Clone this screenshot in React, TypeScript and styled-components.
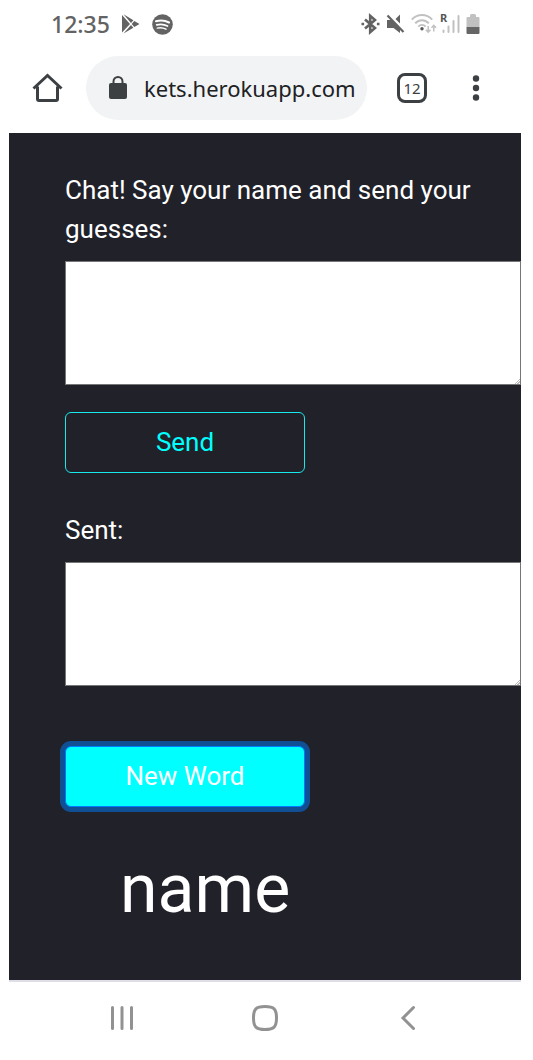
import React from "react";
import styled, { createGlobalStyle } from "styled-components";

const GlobalStyle = createGlobalStyle`
  *, *::before, *::after { box-sizing: border-box; }
  body { margin: 0; background: #fff; }
`;

const Phone = styled.div`
  display: flex;
  flex-direction: column;
  min-height: 100vh;
  padding: 0 12px 0 9px;
  background: #fff;
  font-family: Roboto, "Liberation Sans", sans-serif;
`;

const StatusBar = styled.header`
  display: flex;
  align-items: center;
  justify-content: space-between;
  height: 48px;
  padding: 0 41px 0 42px;
  color: #636363;
`;

const StatusGroup = styled.div<{ $gap: number }>`
  display: flex;
  align-items: center;
  gap: ${({ $gap }) => $gap}px;
  svg { display: block; overflow: visible; }
`;

const Clock = styled.time`
  font: 500 23px/32px "Noto Sans", sans-serif;
`;

const Toolbar = styled.nav`
  display: flex;
  align-items: center;
  height: 85px;
  padding: 8px 29px 13px 22px;
  color: #3c4043;
`;

const IconButton = styled.button`
  display: flex;
  align-items: center;
  justify-content: center;
  width: 32px;
  height: 40px;
  padding: 0;
  border: 0;
  background: none;
  color: inherit;
  cursor: pointer;
`;

const AddressPill = styled.div`
  display: flex;
  flex: 1;
  align-items: center;
  gap: 16px;
  min-width: 0;
  height: 64px;
  margin: 0 30px 0 23px;
  padding: 0 8px 0 22px;
  border-radius: 32px;
  background: #f1f3f4;
`;

const Address = styled.input`
  flex: 1;
  min-width: 0;
  height: 40px;
  padding: 0;
  border: 0;
  outline: 0;
  background: none;
  color: #202124;
  font: 400 22px/40px "Noto Sans", sans-serif;
`;

const TabsButton = styled.button`
  width: 30px;
  height: 30px;
  margin-right: 33px;
  padding: 0;
  border: 3px solid #3c4043;
  border-radius: 8px;
  background: none;
  color: #3c4043;
  font: 400 15px/24px "Noto Sans", sans-serif;
`;

const Page = styled.main`
  display: flex;
  flex: 1;
  flex-direction: column;
  align-items: flex-start;
  padding: 38px 0 0 56px;
  border-bottom: 2px solid #dfdee6;
  background: #212129;
  color: #fff;
`;

const Label = styled.label`
  padding-right: 40px;
  font-size: 26px;
  line-height: 39px;
`;

const MessageBox = styled.textarea`
  display: block;
  width: 100%;
  height: 124px;
  margin: 12px 0 27px;
  padding: 4px;
  border: 1px solid #767676;
  border-radius: 0;
  background: #fff;
  font: 22px/30px Roboto, sans-serif;

  &::-webkit-resizer {
    background: linear-gradient(135deg, #fff 0 17px, #bbb 17px 18px, #fff 18px 19px, #bbb 19px 20px, #fff 20px);
  }
`;

const ActionButton = styled.button<{ $active?: boolean }>`
  width: 240px;
  height: 61px;
  padding: 0;
  border: ${({ $active }) => ($active ? "1px solid #007bff" : "1px solid #17e9ec")};
  border-radius: 6px;
  background: ${({ $active }) => ($active ? "#00ffff" : "transparent")};
  box-shadow: ${({ $active }) => ($active ? "0 0 0 5px #114f95" : "none")};
  color: ${({ $active }) => ($active ? "#fff" : "#00ffff")};
  font: 26px/39px Roboto, sans-serif;
  cursor: pointer;
`;

const Field = styled.section<{ $space: number }>`
  display: flex;
  flex-direction: column;
  align-items: flex-start;
  width: 100%;
  margin-bottom: ${({ $space }) => $space}px;
`;

const Word = styled.p`
  margin: 41px 0 0;
  padding-left: 55px;
  font-size: 68px;
  line-height: 82px;
`;

const SystemNav = styled.footer`
  display: flex;
  align-items: center;
  justify-content: space-between;
  height: 78px;
  padding: 0 97px 6px;
  color: #929292;
`;

export default function App() {
  return (
    <>
      <GlobalStyle />
      <Phone>
        <StatusBar>
          <StatusGroup $gap={12}>
            <Clock>12:35</Clock>
            <svg width="18" height="20" viewBox="0 0 18 20" fill="currentColor">
              <path d="M0 1v17.500L8 10zM1.500.3 9 9l2.400-2.700zM1.500 19.500 9 11l2.400 2.700zM12.300 7 9.700 10l2.600 3L17.500 10z" />
            </svg>
            <svg width="21" height="21" viewBox="0 0 21 21" fill="none">
              <circle cx="10.500" cy="10.500" r="10.300" fill="#636363" />
              <g stroke="#fff" strokeLinecap="round">
                <path d="M4 7.300c4.500-1.300 9-.9 13 1.200" strokeWidth="2.100" />
                <path d="M4.700 10.900c3.800-1 7.500-.6 10.800 1.200" strokeWidth="1.700" />
                <path d="M5.300 14.100c3.200-.7 6-.4 8.700 1.100" strokeWidth="1.400" />
              </g>
            </svg>
          </StatusGroup>
          <StatusGroup $gap={6}>
            <svg width="19" height="20" viewBox="0 0 19 20" fill="none" stroke="currentColor" strokeWidth="2.600">
              <path d="M4 5.500 14 14l-4.800 4.200V1.800L14 6 4 14.500" />
              <path d="M.5 10h2.600M15.900 10h2.600" />
            </svg>
            <svg width="19" height="20" viewBox="0 0 19 20" fill="currentColor">
              <path d="M1 6h4.500L14 14.500V19L7.500 14H1zM9.500 5l4.500-4.500V9.500z" />
              <path d="M1.500 1.500 17.500 18" stroke="currentColor" strokeWidth="2.200" />
            </svg>
            <svg width="25" height="20" viewBox="0 0 25 20" fill="none" stroke="#c1c1c1" strokeWidth="2">
              <path d="M.8 5.600c5.800-6 14.600-6 20.400 0M4.200 9.300c4-4.100 9.600-4.100 13.600 0M7.300 12.600c2.200-2.200 5.200-2.200 7.400 0" />
              <circle cx="11" cy="14.800" r="1.700" fill="#555" stroke="none" />
              <path d="M17.200 12v5.800M14.900 15.700l2.300 2.500 2.300-2.500M22.800 17.500v-5.800M20.500 13.800l2.300-2.500 2.300 2.500" strokeWidth="1.500" />
            </svg>
            <svg width="18" height="20" viewBox="0 0 18 20">
              <g stroke="#c1c1c1" strokeWidth="2" strokeLinecap="round">
                <path d="M1.500 16.500V18M6.500 12.500V18M11.500 7V18M16.500 2V18" />
              </g>
              <text x="-2" y="8" fill="#555" fontFamily="Noto Sans, sans-serif" fontSize="11" fontWeight="700">R</text>
            </svg>
            <svg width="14" height="20" viewBox="0 0 14 20">
              <path d="M1.500 3H4V1.500Q4 0 5.500 0h3Q10 0 10 1.500V3h2.500q1 0 1 1v9H.5V4q0-1 1-1z" fill="#c1c1c1" />
              <path d="M.5 13h13v6q0 1-1 1h-11q-1 0-1-1z" fill="#666" />
            </svg>
          </StatusGroup>
        </StatusBar>
        <Toolbar>
          <IconButton aria-label="Home">
            <svg width="32" height="32" viewBox="0 0 32 32" fill="none" stroke="currentColor" strokeWidth="3">
              <path d="M2.500 16.500 16.500 3.500 30.500 16.500M6.500 14.500v12.500q0 1.500 1.500 1.500h17q1.500 0 1.500-1.500V14.500" />
            </svg>
          </IconButton>
          <AddressPill>
            <svg width="20" height="24" viewBox="0 0 20 24">
              <rect x="1" y="7" width="18" height="16" rx="2" fill="#3c4043" />
              <path d="M5.500 8V5.500a4.500 4.500 0 0 1 9 0V8" fill="none" stroke="#3c4043" strokeWidth="2" />
            </svg>
            <Address aria-label="Address" defaultValue="kets.herokuapp.com" />
          </AddressPill>
          <TabsButton aria-label="Open tabs">12</TabsButton>
          <IconButton aria-label="More options">
            <svg width="8" height="28" viewBox="0 0 8 28" fill="currentColor">
              <circle cx="4" cy="4.500" r="3.200" />
              <circle cx="4" cy="14" r="3.200" />
              <circle cx="4" cy="23.500" r="3.200" />
            </svg>
          </IconButton>
        </Toolbar>
        <Page>
          <Field $space={38}>
            <Label htmlFor="guess">Chat! Say your name and send your guesses:</Label>
            <MessageBox id="guess" />
            <ActionButton type="button">Send</ActionButton>
          </Field>
          <Field $space={33}>
            <Label htmlFor="sent">Sent:</Label>
            <MessageBox id="sent" />
          </Field>
          <ActionButton type="button" $active>New Word</ActionButton>
          <Word>name</Word>
        </Page>
        <SystemNav>
          <IconButton aria-label="Recent apps">
            <svg width="24" height="26" viewBox="0 0 24 26" fill="none" stroke="currentColor" strokeWidth="3" strokeLinecap="round">
              <path d="M2.500 2.500v21M12 2.500v21M21.500 2.500v21" />
            </svg>
          </IconButton>
          <IconButton aria-label="Home screen">
            <svg width="26" height="26" viewBox="0 0 26 26" fill="none" stroke="currentColor" strokeWidth="3">
              <path d="M1.500 13C1.500 4 4 1.500 13 1.500S24.500 4 24.500 13 22 24.500 13 24.500 1.500 22 1.500 13z" />
            </svg>
          </IconButton>
          <IconButton aria-label="Back">
            <svg width="16" height="26" viewBox="0 0 16 26" fill="none" stroke="currentColor" strokeWidth="3" strokeLinecap="round">
              <path d="M13.500 2.500 3 13l10.500 10.500" />
            </svg>
          </IconButton>
        </SystemNav>
      </Phone>
    </>
  );
}
